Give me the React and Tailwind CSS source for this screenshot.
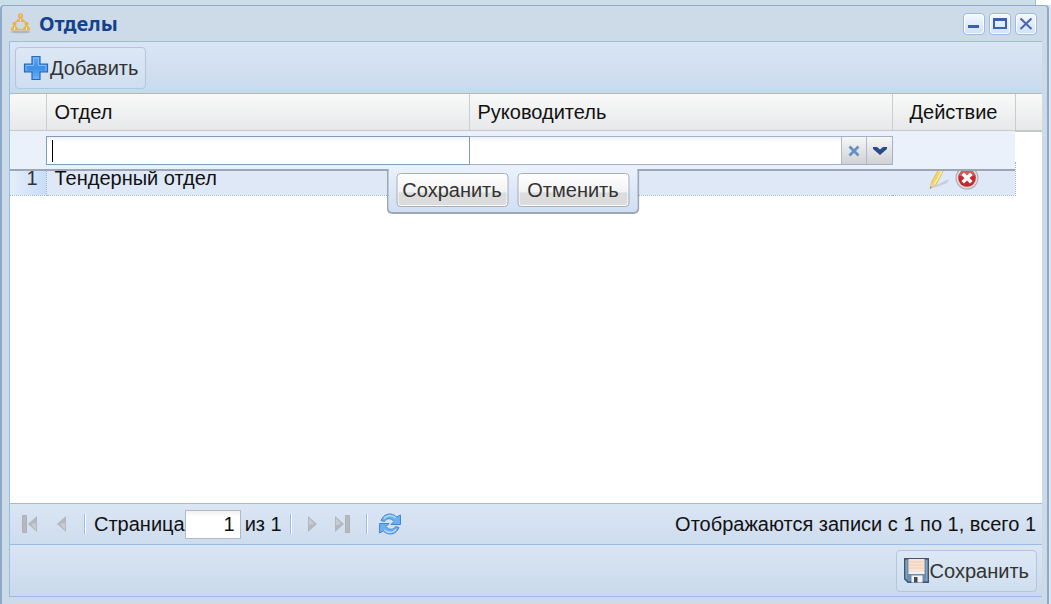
import React, { useState } from "react";

const OrgIcon = () => (
    <svg width="21" height="21" viewBox="0 0 21 21" aria-hidden="true">
        <ellipse cx="10.5" cy="19" rx="10" ry="1.3" fill="#a3aeb9" opacity="0.8" />
        <path d="M7 8 4.500 10M14 8l2.500 2M8 16.500h5" stroke="#dcb878" strokeWidth="1.300" fill="none" />
        <g fill="#eab345">
            <circle cx="10.5" cy="3" r="2.700" />
            <path d="M6.300 9c0-5 8.400-5 8.400 0z" />
            <circle cx="4.500" cy="10.800" r="2.100" />
            <path d="M.8 17.500c0-6.500 7.400-6.500 7.400 0z" />
            <circle cx="16.500" cy="10.800" r="2.100" />
            <path d="M12.800 17.500c0-6.500 7.400-6.500 7.400 0z" />
        </g>
        <path d="M10.500 6v2.500M4.500 14v3M16.500 14v3" stroke="#f7ebd0" strokeWidth="1.200" />
        <circle cx="10.500" cy="2.600" r="1" fill="#f6cf63" />
    </svg>
);

const PlusIcon = () => (
    <svg width="26" height="26" viewBox="0 0 26 26" aria-hidden="true">
        <defs>
            <linearGradient id="plus" x1="0" y1="0" x2="0" y2="1">
                <stop offset="0" stopColor="#5fa9f3" />
                <stop offset="0.5" stopColor="#3f8fe8" />
                <stop offset="1" stopColor="#68b4f6" />
            </linearGradient>
        </defs>
        <path d="M9 1.500h8v7.500h7.500v8H17v7.500H9V17H1.500V9H9z" fill="url(#plus)" stroke="#2a68b8" strokeWidth="1.200" />
        <path d="M3 15.500v-5h7.500V3h5v7.500H23v5" fill="none" stroke="#7dbaf7" strokeWidth="1" />
    </svg>
);

const PencilIcon = () => (
    <svg width="24" height="24" viewBox="0 0 24 24" aria-hidden="true">
        <path d="M4 22 22 13l-2 4-11 4z" fill="#b9c1cf" opacity="0.7" />
        <path d="M13 1 17 3 9 19 3 22.500 4.500 16z" fill="#f3d465" stroke="#dcb95c" strokeWidth="0.800" />
        <path d="M12 5 14.500 6 7 19" fill="none" stroke="#fff0ac" strokeWidth="1.200" />
        <path d="m4.500 16.500 4 2.500L3 22.500z" fill="#e2d3b4" />
        <path d="m3.400 20.500 1.400 1.200L3 22.500z" fill="#777" />
    </svg>
);

const DeleteIcon = () => (
    <svg width="24" height="24" viewBox="0 0 24 24" aria-hidden="true">
        <circle cx="12" cy="12" r="11.500" fill="#a9acb4" />
        <circle cx="12" cy="12" r="10.500" fill="#dedcdf" />
        <circle cx="12" cy="12" r="8.800" fill="#c3292d" />
        <path d="M4 9.500a8.500 8.500 0 0 1 16 0q-8 3-16 0z" fill="#d65a58" />
        <path d="m9 9 6 6m0-6-6 6" stroke="#fff" strokeWidth="3.600" strokeLinecap="square" />
    </svg>
);

const FloppyIcon = () => (
    <svg width="25" height="25" viewBox="0 0 25 25" aria-hidden="true">
        <path d="M.7.7h23.600v23.600H4L.7 21z" fill="#6c8dae" stroke="#40566f" strokeWidth="1.400" />
        <path d="M2.200 2v18.500M22.800 2v21" stroke="#8eabc6" strokeWidth="1" />
        <path d="M4.500 1h16v13h-16z" fill="#fbe3d3" />
        <path d="M4.500 4h16M4.500 7h16M4.500 10h16" stroke="#efcab4" strokeWidth="1" />
        <path d="M4.500 14h16v2h-16z" fill="#eef2f6" />
        <path d="M7.500 17.500h11v7h-11z" fill="#f1f3f5" />
        <path d="M10 19h3.500v5.500H10z" fill="#3c4b5c" />
    </svg>
);

const RefreshIcon = () => (
    <svg width="24" height="24" viewBox="0 0 24 24" aria-hidden="true">
        <g fill="#6db0f0" stroke="#4486d3" strokeWidth="1" strokeLinejoin="round">
            <path d="M3 8.500C6 1 14 .2 18.500 5L22.500 3v9.500H13l3-3C13 5.500 8.500 6 6.500 9.500z" />
            <path d="M21 15.500C18 23 10 23.800 5.500 19L1.500 21v-9.500H11l-3 3c3 4 7.500 3.500 9.500 0z" />
        </g>
        <path d="M6 6.500c3-4 8-4 11.500-.500M18 17.500c-3 4-8 4-11.500.500" stroke="#b4dafc" strokeWidth="1.400" fill="none" />
    </svg>
);

// bar: draws the stop bar used by the first / last page arrows
const PageArrow = ({ back, bar }) => (
    <svg
        width="18"
        height="18"
        viewBox="0 0 18 18"
        aria-hidden="true"
        className={back ? "rotate-180" : ""}
    >
        <path d={bar ? "M1 1v16l9-8z" : "M4 1v16l9-8z"} fill="#b4b8be" />
        <path d={bar ? "M2 3v7l5-1z" : "M5 3v7l5-1z"} fill="#c9cdd2" />
        {bar && <path d="M11.500.500h4v17h-4z" fill="#b6b9bd" stroke="#a6aab0" strokeWidth="0.800" />}
    </svg>
);

const toolIcons = {
    minimize: <path d="M5 12h11v3H5z" fill="#3c5fae" />,
    maximize: <path d="M4 5h14v11H4zM6 8v6h10V8z" fill="#3c5fae" fillRule="evenodd" />,
    close: <path d="m5.500 5.500 11 10.500m0-10.500-11 10.500" stroke="#4a67a8" strokeWidth="2" />
};

const WindowTool = ({ type, label }) => (
    <button
        aria-label={label}
        className="flex h-[22px] w-[22px] items-center justify-center rounded-[4px] border border-[#9dbbe2] bg-linear-to-b from-[#f3f8fe] to-[#cfe2f9] ring-1 ring-inset ring-white"
    >
        <svg width="22" height="22" viewBox="0 0 22 22" className="shrink-0" aria-hidden="true">
            {toolIcons[type]}
        </svg>
    </button>
);

const Separator = () => <span className="h-5 w-[2px] border-l border-[#98bced] border-r border-r-white" />;

const FrameButton = ({ icon, children }) => (
    <button className="flex h-[42px] items-center gap-px rounded-[4px] border border-[#b5c6da] bg-linear-to-b from-[#dde8f5] to-[#cfdeef] px-[7px] text-[#333]">
        {icon}
        {children}
    </button>
);

const EditorButton = ({ children }) => (
    <button className="h-[34px] w-28 rounded-[4px] border border-[#a9b0b9] bg-linear-to-b from-white from-0% via-[#f2f2f2] via-55% to-[#dcdcdc] to-60% text-[#333] ring-1 ring-inset ring-white">
        {children}
    </button>
);

const rows = [{ id: 1, name: "Тендерный отдел" }];

const App = () => {
    const [department, setDepartment] = useState("");
    const [head, setHead] = useState("");
    const [page, setPage] = useState("1");

    return (
        <div className="flex min-h-screen flex-col bg-[#dce6f1] font-['Liberation_Sans',Arial,sans-serif] text-[20px] leading-6 text-[#111]">
            <div className="h-[5px] bg-[#cbdfe6] pl-4">
                <div className="ml-auto h-full w-4 border-l border-[#a8bccb] bg-white" />
            </div>

            <section className="mr-[2px] flex flex-1 flex-col rounded-t-[4px] border-2 border-b-0 border-t border-[#8fa9cb] bg-[#cddbe9] pb-[7px] pl-[7px] pr-[5px]">
                <header className="flex h-[35px] items-center pl-px pr-[5px]">
                    <OrgIcon />
                    <h1 className="ml-2 flex-1 font-['Noto_Sans',sans-serif] text-[20px] font-bold text-[#15428b]">Отделы</h1>
                    <div className="flex gap-1">
                        <WindowTool type="minimize" label="Свернуть" />
                        <WindowTool type="maximize" label="Развернуть" />
                        <WindowTool type="close" label="Закрыть" />
                    </div>
                </header>

                <div className="flex flex-1 flex-col border border-r-0 border-[#99bbe8] bg-white">
                    <div className="flex h-[52px] items-center border-b border-[#99bbe8] bg-linear-to-b from-[#dae6f4] to-[#c9d9ed] px-[5px]">
                        <FrameButton icon={<PlusIcon />}>Добавить</FrameButton>
                    </div>

                    <div className="relative flex-1">
                        <table className="w-full table-fixed border-collapse text-left">
                            <colgroup>
                                <col className="w-9" />
                                <col />
                                <col />
                                <col className="w-[123px]" />
                                <col className="w-[27px]" />
                            </colgroup>
                            <thead className="bg-linear-to-b from-[#f9f9f9] to-[#e6e8e9]">
                                <tr className="h-[37px] border-b-2 border-[#c6c8ca]">
                                    <th className="border-r border-[#c9ccd0]" />
                                    <th className="border-r border-[#c9ccd0] px-2 font-normal">Отдел</th>
                                    <th className="border-r border-[#c9ccd0] px-2 font-normal">Руководитель</th>
                                    <th className="border-r border-[#c9ccd0] text-center font-normal">Действие</th>
                                    <th />
                                </tr>
                            </thead>
                            <tbody>
                                <tr className="h-[31px]">
                                    <td colSpan={5} />
                                </tr>
                                {rows.map((row) => (
                                    <tr key={row.id} className="h-[33px]">
                                        <td className="border-b border-r border-dotted border-[#9db4d6] bg-linear-to-r from-[#e4eefa] to-[#c8ddf8] p-0 pr-2 text-right text-[#333]">
                                            {row.id}
                                        </td>
                                        <td className="border-b border-dotted border-[#9db4d6] bg-[#dfe8f6] p-0 px-2">{row.name}</td>
                                        <td className="border-b border-dotted border-[#9db4d6] bg-[#dfe8f6] p-0" />
                                        <td className="border-b border-r border-dotted border-[#9db4d6] bg-[#dfe8f6] p-0">
                                            <div className="flex justify-center gap-1">
                                                <button aria-label="Редактировать">
                                                    <PencilIcon />
                                                </button>
                                                <button aria-label="Удалить">
                                                    <DeleteIcon />
                                                </button>
                                            </div>
                                        </td>
                                        <td />
                                    </tr>
                                ))}
                            </tbody>
                        </table>

                        {/* Row editor floats over the grid rows */}
                        <form
                            onSubmit={(e) => e.preventDefault()}
                            className="absolute left-0 right-[27px] top-[37px] h-10 border-b-2 border-[#9da6b6] bg-[#eaf1fb]"
                        >
                            <div className="grid grid-cols-2 pl-9 pr-[122px] pt-[5px]">
                                <div className="relative">
                                    <input
                                        autoFocus
                                        aria-label="Отдел"
                                        value={department}
                                        onChange={(e) => setDepartment(e.target.value)}
                                        className={`h-[29px] w-full border border-[#7f9db9] bg-linear-to-b from-[#f1f4f7] to-white to-20% px-[5px] outline-none ${
                                            department ? "" : "caret-transparent"
                                        }`}
                                    />
                                    {!department && <span className="pointer-events-none absolute left-[6px] top-1 h-[22px] w-px bg-black" />}
                                </div>
                                <div className="flex h-[29px] border border-l-0 border-[#a3b3c6]">
                                    <input
                                        aria-label="Руководитель"
                                        value={head}
                                        onChange={(e) => setHead(e.target.value)}
                                        className="min-w-0 flex-1 bg-linear-to-b from-[#f1f4f7] to-white to-20% px-[5px] outline-none"
                                    />
                                    <button
                                        type="button"
                                        aria-label="Очистить"
                                        onClick={() => setHead("")}
                                        className="flex w-[25px] items-center justify-center border-l border-[#b5b8c8] bg-linear-to-b from-[#f7f7f7] to-[#cfd1d4]"
                                    >
                                        <svg width="12" height="12" viewBox="0 0 12 12" aria-hidden="true">
                                            <path d="m1.500 1.500 9 9m0-9-9 9" stroke="#6391c2" strokeWidth="2.800" />
                                        </svg>
                                    </button>
                                    <button
                                        type="button"
                                        aria-label="Открыть список"
                                        className="flex w-[26px] items-center justify-center border-l border-[#b5b8c8] bg-linear-to-b from-[#f7f7f7] to-[#cfd1d4]"
                                    >
                                        <svg width="14" height="8" viewBox="0 0 14 8" aria-hidden="true">
                                            <path d="M0 0h4L7 2.500 10 0h4v2L7 8 0 2z" fill="#2b4a85" />
                                        </svg>
                                    </button>
                                </div>
                            </div>
                            <div className="absolute left-1/2 top-full flex -translate-x-1/2 gap-[9px] rounded-b-[6px] border-2 border-t-0 border-[#9da6b6] bg-linear-to-b from-[#eaf1fb] to-[#cfdff3] px-2 pb-[5px] pt-1">
                                <EditorButton>Сохранить</EditorButton>
                                <EditorButton>Отменить</EditorButton>
                            </div>
                        </form>
                    </div>

                    <nav className="flex h-[41px] items-center border-t border-[#99bbe8] bg-linear-to-b from-[#dbe6f4] to-[#cddcee] pl-[10px] pr-[6px]">
                        <button aria-label="Первая страница">
                            <PageArrow back bar />
                        </button>
                        <button aria-label="Предыдущая страница" className="ml-[14px] mr-[14px]">
                            <PageArrow back />
                        </button>
                        <Separator />
                        <label htmlFor="page" className="ml-2">
                            Страница
                        </label>
                        <input
                            id="page"
                            value={page}
                            onChange={(e) => setPage(e.target.value)}
                            className="h-[29px] w-14 border border-[#b5b8c8] bg-linear-to-b from-[#eef0f2] to-white to-20% pr-[5px] text-right outline-none"
                        />
                        <span className="ml-1 mr-2">из 1</span>
                        <Separator />
                        <button aria-label="Следующая страница" className="ml-3 mr-3">
                            <PageArrow />
                        </button>
                        <button aria-label="Последняя страница" className="mr-[14px]">
                            <PageArrow bar />
                        </button>
                        <Separator />
                        <button aria-label="Обновить" className="ml-[10px]">
                            <RefreshIcon />
                        </button>
                        <span className="ml-auto">Отображаются записи с 1 по 1, всего 1</span>
                    </nav>

                    <footer className="flex h-[52px] items-center justify-end border-t border-[#99bbe8] bg-linear-to-b from-[#dae5f3] to-[#c9d9eb] px-[5px]">
                        <FrameButton icon={<FloppyIcon />}>Сохранить</FrameButton>
                    </footer>
                </div>
            </section>
        </div>
    );
};

export default App;
